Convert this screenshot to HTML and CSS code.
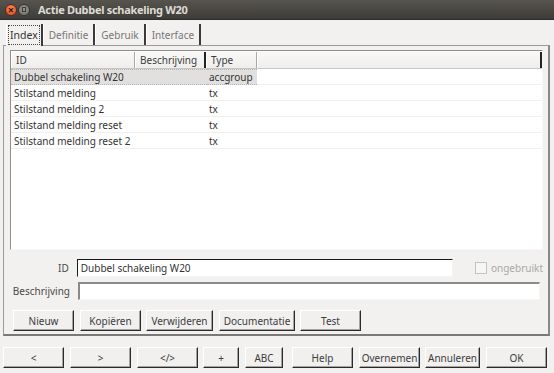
FILE: index.html
```html
<html>
<head>
	<title>Actie Dubbel schakeling W20</title>
	<link rel="stylesheet" href="styles.css">
</head>
<body>
	<div class="titlebar">
		<span class="wbtn close">&#215;</span>
		<span class="wbtn mini"></span>
		<span class="title">Actie Dubbel schakeling W20</span>
	</div>

	<div class="tabs">
		<div class="tab active"><span class="focus">Index</span></div>
		<div class="tab">Definitie</div>
		<div class="tab">Gebruik</div>
		<div class="tab">Interface</div>
	</div>

	<div class="panel">
		<div class="table">
			<div class="thead">
				<div class="th c1">ID</div>
				<div class="th c2">Beschrijving</div>
				<div class="th c3">Type</div>
				<div class="th c4"></div>
			</div>
			<div class="row selected"><div class="td c12">Dubbel schakeling W20</div><div class="td c3">accgroup</div></div>
			<div class="row"><div class="td c12">Stilstand melding</div><div class="td c3">tx</div></div>
			<div class="row"><div class="td c12">Stilstand melding 2</div><div class="td c3">tx</div></div>
			<div class="row"><div class="td c12">Stilstand melding reset</div><div class="td c3">tx</div></div>
			<div class="row"><div class="td c12">Stilstand melding reset 2</div><div class="td c3">tx</div></div>
		</div>

		<div class="field">
			<label class="lbl">ID</label>
			<div class="input id">Dubbel schakeling W20</div>
			<span class="check"></span><span class="unused">ongebruikt</span>
		</div>
		<div class="field">
			<label class="lbl">Beschrijving</label>
			<div class="input desc"></div>
		</div>

		<div class="actions">
			<button class="btn w61">Nieuw</button>
			<button class="btn w61 g5">Kopiëren</button>
			<button class="btn w67">Verwijderen</button>
			<button class="btn w76 g5">Documentatie</button>
			<button class="btn w61">Test</button>
		</div>
	</div>

	<div class="footer">
		<button class="btn w61">&lt;</button>
		<button class="btn w61">&gt;</button>
		<button class="btn w61 g5">&lt;/&gt;</button>
		<button class="btn w36">+</button>
		<button class="btn w38 g9">ABC</button>
		<button class="btn w61">Help</button>
		<button class="btn w61 g5">Overnemen</button>
		<button class="btn w55">Annuleren</button>
		<button class="btn w61">OK</button>
	</div>
</body>
</html>
```

FILE: styles.css
```css
body {
	margin: 0;
	width: 554px;
	height: 373px;
	overflow: hidden;
	background-color: #f2f1f0;
	font-family: "Noto Sans", "Open Sans", sans-serif;
	font-size: 10px;
	color: #3c3c3c;
}
.titlebar {
	height: 20px;
	display: flex;
	align-items: center;
	padding-left: 5px;
	background: linear-gradient(#57544e, #3d3c38);
	border-bottom: 1px solid #2e2d2a;
	box-sizing: border-box;
}
.wbtn {
	width: 12px;
	height: 12px;
	border-radius: 50%;
	display: flex;
	align-items: center;
	justify-content: center;
	box-sizing: border-box;
}
.close {
	background: radial-gradient(circle at 50% 35%, #f58a5f, #df4a16);
	border: 1px solid #5a2a14;
	color: #3a1a0a;
	font-size: 11px;
	line-height: 10px;
	font-weight: bold;
	margin-right: 1px;
}
.mini {
	background: radial-gradient(circle at 50% 35%, #9a9890, #6e6c66);
	border: 1px solid #36352f;
}
.mini::after {
	content: "";
	width: 4px;
	height: 5px;
	border: 1px solid #3b3a35;
	box-sizing: border-box;
}
.title {
	margin-left: 8px;
	color: #dfdbd2;
	font-weight: bold;
	font-size: 11px;
	letter-spacing: -0.3px;
}
.tabs {
	display: flex;
	margin-top: 4px;
	padding-left: 6px;
	height: 21px;
}
.tab {
	display: flex;
	align-items: center;
	padding: 0 5px 0 5px;
	color: #787675;
	border-right: 2px solid #3a3a3a;
	border-left: 1px solid #ffffff;
}
.tab.active {
	color: #333333;
	padding: 0 1px;
	margin-bottom: -1px;
	position: relative;
	z-index: 1;
	background-color: #f2f1f0;
}
.focus {
	border: 1px dotted #444;
	padding: 2px 1px;
	font-size: 10.5px;
}
.panel {
	margin: 0 4px 0 3px;
	height: 291px;
	border: 1px solid #9b9a98;
	border-right: 2px solid #8a8987;
	border-bottom: 2px solid #7a7977;
	box-sizing: border-box;
	padding: 4px 5px 0 6px;
}
.table {
	height: 200px;
	background-color: #ffffff;
	border: 1px solid #8e8d8b;
	border-right-color: #f6f6f6;
	border-bottom-color: #f6f6f6;
	box-sizing: border-box;
	padding: 1px 0 0 0;
}
.thead {
	display: flex;
	height: 16px;
	background: linear-gradient(#f8f8f7, #efeeed);
	border-bottom: 1px solid #c8c7c5;
}
.th {
	display: flex;
	align-items: center;
	padding-left: 4px;
	box-sizing: border-box;
	border-right: 1px solid #a8a7a5;
	border-left: 1px solid #ffffff;
}
.c1 { width: 124px; }
.c2 { width: 71px; border-right: 2px solid #222; }
.c3 { width: 51px; }
.c4 { flex: 1; border-right: 2px solid #222; }
.row {
	display: flex;
	height: 16px;
	border-bottom: 1px solid #f0f0ef;
	box-sizing: border-box;
	align-items: center;
	color: #333;
}
.td {
	padding-left: 3px;
	box-sizing: border-box;
	white-space: nowrap;
}
.c12 { width: 196px; }
.row .c3 { width: 50px; padding-left: 2px; }
.selected .td {
	background-color: #e1e0df;
	height: 16px;
	display: flex;
	align-items: center;
	border-top: 1px dotted #b5b4b2;
	border-bottom: 1px dotted #b5b4b2;
}
.field {
	display: flex;
	align-items: center;
	height: 18px;
	margin-top: 9px;
}
.field + .field {
	margin-top: 5px;
}
.lbl {
	width: 60px;
	text-align: right;
	padding-right: 8px;
	color: #4a4a4a;
}
.input {
	height: 18px;
	background-color: #ffffff;
	box-sizing: border-box;
	border: 1px solid #f4f4f4;
	border-top: 1px solid #1a1a1a;
	border-left: 1px solid #1a1a1a;
	display: flex;
	align-items: center;
	padding-left: 3px;
	color: #333;
}
.input.id { width: 384px; }
.input.desc {
	width: 462px;
	border-top: 2px solid #8a8a8a;
	border-left: 2px solid #8a8a8a;
}
.check {
	width: 12px;
	height: 12px;
	margin-left: 22px;
	border: 1px solid #c4c3c1;
	background-color: #f6f6f5;
	box-sizing: border-box;
}
.unused {
	margin-left: 4px;
	color: #a9a8a6;
}
.actions {
	display: flex;
	margin-top: 10px;
	padding-left: 3px;
}
.btn {
	height: 21px;
	margin: 0 6px 0 0;
	padding: 0;
	font-family: inherit;
	font-size: 10px;
	color: #3c3c3c;
	background-color: #f1f0ef;
	border: 1px solid;
	border-color: #ffffff #2a2a2a #2a2a2a #ffffff;
	box-shadow: inset -1px -1px 0 #a5a4a2;
	box-sizing: border-box;
	white-space: nowrap;
}
.w61 { width: 61px; }
.w67 { width: 67px; }
.w76 { width: 76px; }
.w36 { width: 36px; }
.w38 { width: 38px; }
.w55 { width: 55px; }
.g5 { margin-right: 5px; }
.g9 { margin-right: 9px; }
.footer {
	display: flex;
	margin-top: 11px;
	padding-left: 3px;
}
```
